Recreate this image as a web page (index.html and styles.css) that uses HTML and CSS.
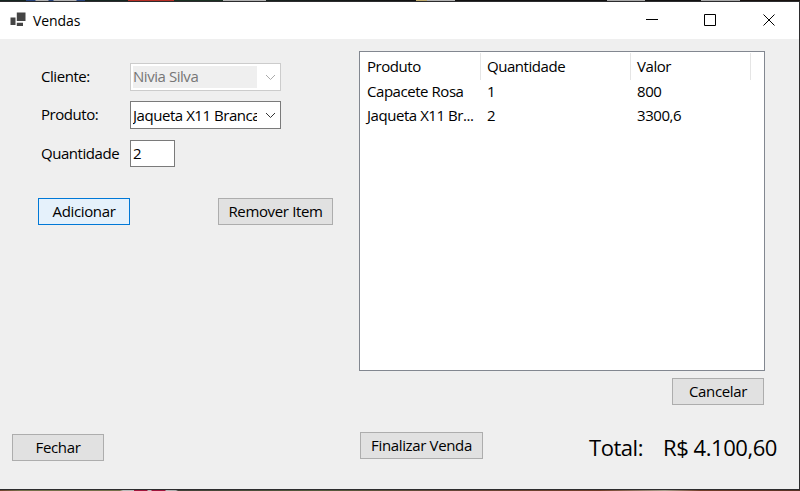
FILE: index.html
```
<!DOCTYPE html>
<html lang="pt-BR">
<head>
<meta charset="utf-8">
<title>Vendas</title>
<link rel="stylesheet" href="styles.css">
</head>
<body>
<div class="strip strip-top"></div>
<div class="window">
  <header class="titlebar">
    <svg class="app-icon" width="16" height="16" viewBox="0 0 16 16"><path d="M0.500 5.500h5v7.500h-5zM6.800 0.600h8.700v8.400H6.800zM6.800 10.700h6.200v3.300H6.800z" fill="#444"/></svg>
    <h1>Vendas</h1>
    <svg class="controls" width="130" height="14" viewBox="0 0 130 14" fill="none" stroke="#000"><path d="M0 6.500h12M58.500 1.500h11v11h-11zM117.500 1.500l11 11M128.500 1.500l-11 11"/></svg>
  </header>
  <main>
    <section class="form">
      <div class="fields">
        <label>Cliente:</label>
        <div class="combo disabled"><span>Nivia Silva</span><svg width="11" height="7" viewBox="0 0 11 7"><path d="M1 1l4.500 4.500L10 1"/></svg></div>
        <label>Produto:</label>
        <div class="combo"><span>Jaqueta X11 Branca</span><svg width="11" height="7" viewBox="0 0 11 7"><path d="M1 1l4.500 4.500L10 1"/></svg></div>
        <label class="quantidade">Quantidade</label>
        <div class="textbox">2</div>
      </div>
      <div class="actions">
        <button class="btn focused">Adicionar</button>
        <button class="btn remover">Remover Item</button>
      </div>
    </section>
    <section class="side">
      <div class="list">
        <div class="row head"><span>Produto</span><span>Quantidade</span><span>Valor</span></div>
        <div class="row"><span>Capacete Rosa</span><span>1</span><span>800</span></div>
        <div class="row"><span>Jaqueta X11 Br...</span><span>2</span><span>3300,6</span></div>
      </div>
      <button class="btn cancelar">Cancelar</button>
    </section>
  </main>
  <footer>
    <button class="btn fechar">Fechar</button>
    <button class="btn finalizar">Finalizar Venda</button>
    <div class="total"><span>Total:</span><span class="total-value">R$ 4.100,60</span></div>
  </footer>
</div>
<div class="strip strip-bottom"></div>
</body>
</html>
```
FILE: styles.css
```
* { box-sizing: border-box; }
body {
  margin: 0;
  width: 800px;
  height: 491px;
  overflow: hidden;
  background: #efefef;
  color: #000;
  font: 15px/20px "Open Sans", "Noto Sans", sans-serif;
  letter-spacing: -0.45px;
  white-space: nowrap;
}
.strip { height: 2px; border-style: solid; border-width: 0; border-color: #2c2c2e; }
.strip-top {
  border-bottom-width: 1px;
  background: linear-gradient(90deg, #14251f 26px, #26427b 26px, #26427b 35px, #b3b3b3 36px, #b3b3b3 48px, #26427b 49px, #26427b 53px, #b3b3b3 54px, #b3b3b3 76px, #26427b 77px, #26427b 85px, #14251f 85px, #14251f 128px, #b82f25 128px, #b82f25 174px, #1a3022 174px, #1a3022 223px, #b3b3b3 223px, #b3b3b3 266px, #17211e 266px, #111 416px, #c1ad6e 416px, #c1ad6e 427px, #b3b3b3 427px, #b3b3b3 455px, #111 455px, #111 607px, #aaa 607px, #aaa 645px, #111 645px, #111 701px, #aaa 701px, #aaa 740px, #17110e 740px);
}
.strip-bottom {
  border-top-width: 1px;
  background: linear-gradient(90deg, #70422e, #75704a 20px, #75704a 120px, #bbb 123px, #bbb 134px, #a0163c 134px, #a0163c 147px, #bbb 148px, #bbb 151px, #a0163c 152px, #a0163c 165px, #bbb 166px, #aaa 176px, #414137 178px, #555b3d 320px, #654637 450px, #733d28 600px, #aaa08c 665px, #733d28 700px, #583125);
}
.window { height: 487px; border-right: 1px solid #2c2c2e; }
.titlebar {
  display: flex;
  align-items: center;
  height: 37px;
  padding: 0 23px 0 10px;
  background: #fff;
}
.app-icon { margin-top: -1px; }
.titlebar h1 { margin: 1px 0 0 7px; font-size: 14px; font-weight: 400; letter-spacing: -0.1px; }
.controls { margin-left: auto; margin-top: -1px; }
main { display: flex; height: 390px; }
.form { width: 359px; padding: 24px 0 0 38px; }
.fields {
  display: grid;
  grid-template-columns: 89px 151px;
  grid-template-rows: 28px 28px 27px;
  row-gap: 10px;
  padding-left: 3px;
  align-items: center;
}
.fields label { padding-bottom: 2px; }
.fields .quantidade { padding-bottom: 0; }
.combo {
  display: flex;
  align-items: center;
  height: 28px;
  padding: 2px 4px 2px 2px;
  border: 1px solid #7a7a7a;
  background: #fff;
}
.combo span { width: 124px; height: 22px; line-height: 20px; overflow: hidden; }
.combo svg { margin-left: auto; fill: none; stroke: #333; }
.combo.disabled { border-color: #ccc; color: #767676; }
.combo.disabled span { background: #efefef; }
.combo.disabled svg { stroke: #aaa; }
.combo:not(.disabled) span { line-height: 22px; }
.textbox { width: 45px; height: 27px; margin-top: 2px; padding: 2px; border: 1px solid #7a7a7a; background: #fff; line-height: 21px; }
.actions { display: flex; gap: 88px; margin-top: 32px; }
.btn {
  width: 92px;
  height: 27px;
  padding: 0 0 1px;
  border: 1px solid #adadad;
  background: #e1e1e1;
  color: #000;
  font: inherit;
  line-height: 24px;
  letter-spacing: -0.35px;
}
.focused { border-color: #0078d7; background: #e5f1fb; }
.remover { width: 115px; }
.side { display: flex; flex-direction: column; width: 406px; padding-top: 12px; }
.list { height: 320px; padding: 1px 0 0 1px; border: 1px solid #828790; background: #fff; }
.row { display: grid; grid-template-columns: 120px 150px 120px; height: 24px; line-height: 24px; }
.row span { padding-left: 6px; }
.head { height: 26px; line-height: 27px; }
.head span { border-right: 1px solid #e5e5e5; }
.cancelar { align-self: flex-end; margin: 7px 1px 0 0; }
footer { display: flex; align-items: flex-start; padding: 3px 0 0 12px; }
.fechar { margin-top: 2px; }
.finalizar { width: 123px; margin-left: 256px; }
.total { display: flex; margin-left: 106px; font-size: 22px; line-height: 30px; letter-spacing: -0.45px; }
.total-value { margin-left: 20px; }
```
